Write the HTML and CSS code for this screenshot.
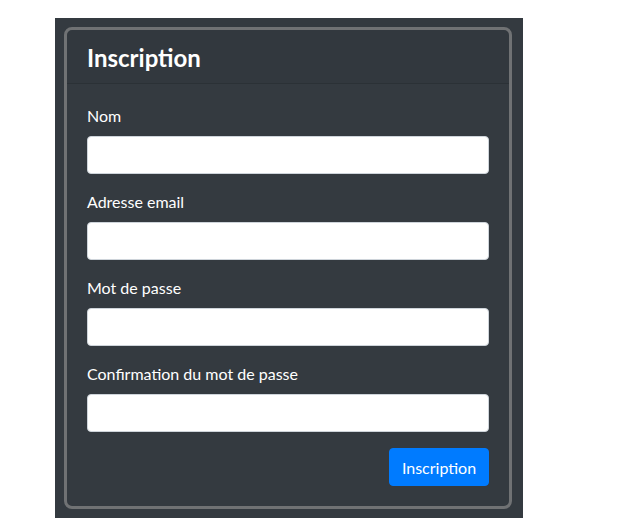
FILE: index.html
```html
<!DOCTYPE html>
<html lang="fr">
<head>
<meta charset="utf-8">
<link rel="stylesheet" href="styles.css">
</head>
<body>
<div class="panel">
  <div class="card">
    <div class="card-header"><h4 class="title">Inscription</h4></div>
    <form class="card-body">
      <div class="group">
        <label class="label">Nom</label>
        <input class="input" type="text">
      </div>
      <div class="group">
        <label class="label">Adresse email</label>
        <input class="input" type="email">
      </div>
      <div class="group">
        <label class="label">Mot de passe</label>
        <input class="input" type="password">
      </div>
      <div class="group">
        <label class="label">Confirmation du mot de passe</label>
        <input class="input" type="password">
      </div>
      <div class="actions">
        <button class="btn" type="button">Inscription</button>
      </div>
    </form>
  </div>
</div>
</body>
</html>
```
FILE: styles.css
```css
html, body {
  margin: 0;
  padding: 0;
  background: #fff;
}
body {
  font-family: Lato, "Noto Sans", sans-serif;
  font-size: 16px;
  line-height: 24px;
  color: #fff;
  padding: 18px 0 0 55px;
}
.panel {
  width: 468px;
  box-sizing: border-box;
  background: #343a40;
  padding: 9px 11px 9px 9px;
}
.card {
  border: 3px solid #707274;
  border-radius: 8px;
  background: #343a40;
  overflow: hidden;
}
.card-header {
  padding: 12px 20px;
  border-bottom: 1px solid rgba(0,0,0,0.125);
  background: rgba(0,0,0,0.03);
}
.title {
  margin: 0;
  font-size: 24px;
  line-height: 29px;
  font-weight: 700;
  padding-top: 1px;
  height: 28px;
}
.card-body {
  padding: 20px;
  margin: 0;
}
.group {
  margin-bottom: 16px;
  display: flex;
  flex-direction: column;
}
.label {
  margin-bottom: 8px;
  font-size: 16px;
}
.input {
  height: 38px;
  box-sizing: border-box;
  border: 1px solid #ced4da;
  border-radius: 4px;
  background: #fff;
  padding: 6px 12px;
  font: inherit;
  margin: 0;
}
.actions {
  display: flex;
  justify-content: flex-end;
}
.btn {
  height: 38px;
  width: 100px;
  border: 1px solid #007bff;
  background: #007bff;
  color: #fff;
  border-radius: 4px;
  font-family: inherit;
  font-size: 16px;
  padding: 0;
}
```
